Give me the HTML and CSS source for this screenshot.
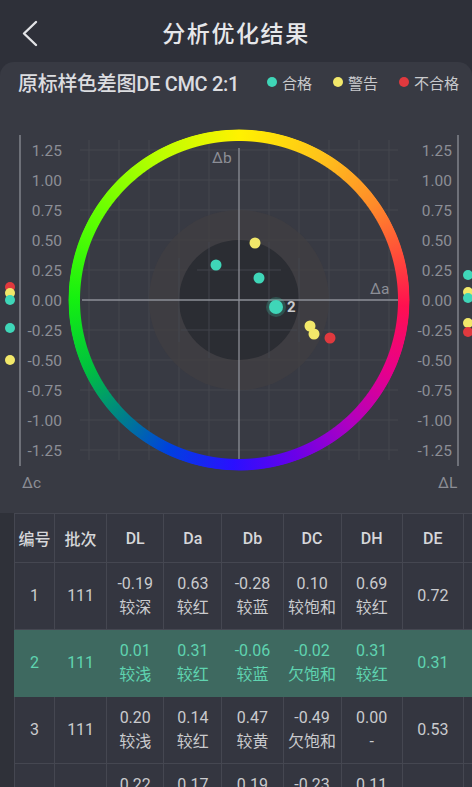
FILE: index.html
```html
<!DOCTYPE html>
<html lang="zh">
<head>
<meta charset="utf-8">
<title>分析优化结果</title>
<link rel="stylesheet" href="styles.css">
</head>
<body>
<div class="app">
  <header class="topbar">
    <svg class="back" width="20" height="28" viewBox="0 0 20 28"><polyline points="15,3 3,14.5 15,26" fill="none" stroke="#e2e3e6" stroke-width="2.4" stroke-linecap="round" stroke-linejoin="round"/></svg>
    <h1 class="title">分析优化结果</h1>
  </header>
  <section class="panel">
    <div class="legend">
      <span class="legend-title">原标样色差图DE CMC 2:1</span>
      <span class="legend-items">
        <span class="li"><i class="dot teal"></i>合格</span>
        <span class="li"><i class="dot yellow"></i>警告</span>
        <span class="li"><i class="dot red"></i>不合格</span>
      </span>
    </div>
    <div class="chart">
      <svg class="chart-svg" width="472" height="400" viewBox="0 106 472 400">
        <g stroke="#44464f" stroke-width="1">
          <line x1="89" y1="140" x2="89" y2="460"/><line x1="119" y1="140" x2="119" y2="460"/><line x1="149" y1="140" x2="149" y2="460"/><line x1="179" y1="140" x2="179" y2="460"/><line x1="209" y1="140" x2="209" y2="460"/>
          <line x1="269" y1="140" x2="269" y2="460"/><line x1="299" y1="140" x2="299" y2="460"/><line x1="329" y1="140" x2="329" y2="460"/><line x1="359" y1="140" x2="359" y2="460"/><line x1="389" y1="140" x2="389" y2="460"/>
          <line x1="80" y1="150" x2="398" y2="150"/><line x1="80" y1="180" x2="398" y2="180"/><line x1="80" y1="210" x2="398" y2="210"/><line x1="80" y1="240" x2="398" y2="240"/><line x1="80" y1="270" x2="398" y2="270"/>
          <line x1="80" y1="330" x2="398" y2="330"/><line x1="80" y1="360" x2="398" y2="360"/><line x1="80" y1="390" x2="398" y2="390"/><line x1="80" y1="420" x2="398" y2="420"/><line x1="80" y1="450" x2="398" y2="450"/>
        </g>
        <circle cx="239" cy="300" r="90" fill="#423e42" fill-opacity="0.7"/>
        <circle cx="239" cy="300" r="60" fill="#2b2d33"/>
        <g stroke="#44464e" stroke-width="1" opacity="0.9">
          <line x1="179" y1="258" x2="179" y2="342"/><line x1="209" y1="242" x2="209" y2="358"/><line x1="269" y1="242" x2="269" y2="358"/><line x1="299" y1="258" x2="299" y2="342"/>
          <line x1="197" y1="270" x2="281" y2="270"/><line x1="181" y1="330" x2="297" y2="330"/>
        </g>
        <g stroke="#8d8f97" stroke-width="1.3">
          <line x1="239" y1="148" x2="239" y2="460"/>
          <line x1="82" y1="300" x2="398" y2="300"/>
          <line x1="20" y1="135" x2="20" y2="466"/>
          <line x1="458" y1="135" x2="458" y2="466"/>
        </g>
        <g class="axis-text" text-anchor="end">
          <text x="62" y="155.5">1.25</text><text x="62" y="185.5">1.00</text><text x="62" y="215.5">0.75</text><text x="62" y="245.5">0.50</text><text x="62" y="275.5">0.25</text><text x="62" y="305.5">0.00</text>
          <text x="62" y="335.5">-0.25</text><text x="62" y="365.5">-0.50</text><text x="62" y="395.5">-0.75</text><text x="62" y="425.5">-1.00</text><text x="62" y="455.5">-1.25</text>
          <text x="452" y="155.5">1.25</text><text x="452" y="185.5">1.00</text><text x="452" y="215.5">0.75</text><text x="452" y="245.5">0.50</text><text x="452" y="275.5">0.25</text><text x="452" y="305.5">0.00</text>
          <text x="452" y="335.5">-0.25</text><text x="452" y="365.5">-0.50</text><text x="452" y="395.5">-0.75</text><text x="452" y="425.5">-1.00</text><text x="452" y="455.5">-1.25</text>
        </g>
        <g class="axis-text">
          <text x="212" y="163">Δb</text>
          <text x="370" y="294">Δa</text>
          <text x="22" y="488">Δc</text>
          <text x="438" y="488">ΔL</text>
        </g>
        <g>
          <circle cx="10" cy="287" r="5" fill="#e0393e"/>
          <circle cx="10" cy="293" r="5" fill="#f2e86a"/>
          <circle cx="10" cy="300" r="5" fill="#3fd6b8"/>
          <circle cx="10" cy="328" r="5" fill="#3fd6b8"/>
          <circle cx="10" cy="360" r="5" fill="#f2e86a"/>
          <circle cx="468" cy="275" r="5" fill="#3fd6b8"/>
          <circle cx="468" cy="292" r="5" fill="#f2e86a"/>
          <circle cx="468" cy="298" r="5" fill="#3fd6b8"/>
          <circle cx="468" cy="323" r="5" fill="#f2e86a"/>
          <circle cx="468" cy="332" r="5" fill="#e0393e"/>
        </g>
        <g>
          <circle cx="255" cy="243" r="5.5" fill="#f2e86a"/>
          <circle cx="216" cy="265" r="5.5" fill="#3fd6b8"/>
          <circle cx="259" cy="278" r="5.5" fill="#3fd6b8"/>
          <circle cx="276" cy="307" r="10" fill="#3fd6b8" fill-opacity="0.22"/>
          <circle cx="276" cy="307" r="7" fill="#3fd6b8"/>
          <circle cx="310" cy="326" r="5.5" fill="#f2e86a"/>
          <circle cx="314" cy="334" r="5.5" fill="#f2e86a"/>
          <circle cx="330" cy="338" r="5.5" fill="#e0393e"/>
          <text class="pt-label" x="287" y="312">2</text>
        </g>
      </svg>
      <div class="ring"></div>
    </div>
    <div class="table-wrap">
      <table class="data">
        <colgroup>
          <col class="c-no"><col class="c-batch"><col class="c-57"><col class="c-58"><col class="c-60"><col class="c-58"><col class="c-60"><col class="c-60"><col class="c-60">
        </colgroup>
        <thead>
          <tr><th>编号</th><th>批次</th><th>DL</th><th>Da</th><th>Db</th><th>DC</th><th>DH</th><th>DE</th><th>D</th></tr>
        </thead>
        <tbody>
          <tr>
            <td>1</td><td>111</td>
            <td><span class="v">-0.19</span><span class="v">较深</span></td>
            <td><span class="v">0.63</span><span class="v">较红</span></td>
            <td><span class="v">-0.28</span><span class="v">较蓝</span></td>
            <td><span class="v">0.10</span><span class="v">较饱和</span></td>
            <td><span class="v">0.69</span><span class="v">较红</span></td>
            <td>0.72</td><td></td>
          </tr>
          <tr class="sel">
            <td>2</td><td>111</td>
            <td><span class="v">0.01</span><span class="v">较浅</span></td>
            <td><span class="v">0.31</span><span class="v">较红</span></td>
            <td><span class="v">-0.06</span><span class="v">较蓝</span></td>
            <td><span class="v">-0.02</span><span class="v">欠饱和</span></td>
            <td><span class="v">0.31</span><span class="v">较红</span></td>
            <td>0.31</td><td></td>
          </tr>
          <tr>
            <td>3</td><td>111</td>
            <td><span class="v">0.20</span><span class="v">较浅</span></td>
            <td><span class="v">0.14</span><span class="v">较红</span></td>
            <td><span class="v">0.47</span><span class="v">较黄</span></td>
            <td><span class="v">-0.49</span><span class="v">欠饱和</span></td>
            <td><span class="v">0.00</span><span class="v">-</span></td>
            <td>0.53</td><td></td>
          </tr>
          <tr>
            <td>4</td><td>111</td>
            <td><span class="v">0.22</span><span class="v">较浅</span></td>
            <td><span class="v">0.17</span><span class="v">较红</span></td>
            <td><span class="v">0.19</span><span class="v">较黄</span></td>
            <td><span class="v">-0.23</span><span class="v">欠饱和</span></td>
            <td><span class="v">0.11</span><span class="v">较红</span></td>
            <td>0.38</td><td></td>
          </tr>
        </tbody>
      </table>
    </div>
  </section>
</div>
</body>
</html>
```
FILE: styles.css
```css
* { box-sizing: border-box; }
html, body { margin: 0; padding: 0; }
body {
  background: #2e3039;
  font-family: Roboto, "Noto Sans CJK SC", sans-serif;
  color: #d4d5d8;
  width: 472px;
  height: 787px;
  overflow: hidden;
}
.app { width: 472px; height: 787px; overflow: hidden; }
.topbar {
  height: 62px;
  display: flex;
  align-items: center;
  justify-content: center;
  position: relative;
}
.back { position: absolute; left: 21px; top: 19px; }
.title {
  margin: 0;
  font-size: 23px;
  font-weight: 500;
  color: #e6e7ea;
  letter-spacing: 1.6px;
  padding-top: 2px;
}
.panel {
  background: #383a43;
  border-radius: 14px 14px 0 0;
  height: 725px;
  overflow: hidden;
}
.legend {
  height: 44px;
  display: flex;
  align-items: center;
  justify-content: space-between;
  padding: 0 13px 4px 18px;
}
.legend-title {
  font-size: 20px;
  font-weight: 500;
  color: #dcdde0;
  letter-spacing: -0.3px;
}
.legend-items { display: flex; gap: 21px; font-size: 15px; color: #c9cacd; }
.li { display: flex; align-items: center; gap: 5px; }
.dot { display: inline-block; width: 10px; height: 10px; border-radius: 50%; }
.dot.teal { background: #3fd6b8; }
.dot.yellow { background: #f2e86a; }
.dot.red { background: #e0393e; }
.chart { position: relative; height: 400px; }
.chart-svg { display: block; }
.axis-text { font-family: Roboto, sans-serif; font-size: 15.5px; fill: #8c8e96; }
.pt-label { font-family: Roboto, sans-serif; font-size: 15px; font-weight: 700; fill: #c8c9cc; }
.ring {
  position: absolute;
  left: 68px;
  top: 23px;
  width: 342px;
  height: 342px;
  border-radius: 50%;
  background: conic-gradient(from 0deg,
    #fff200 0deg, #ffc21a 30deg, #ff8a2a 55deg, #ff4a3a 75deg, #ff1050 92deg,
    #e8008a 115deg, #b000c0 138deg, #6a00e8 160deg, #2a10ff 182deg,
    #0040e0 205deg, #00808a 225deg, #00c040 245deg, #14f010 270deg,
    #60ff00 300deg, #b8ff00 330deg, #fff200 360deg);
  -webkit-mask: radial-gradient(circle closest-side, transparent 158.5px, #000 159.5px, #000 170px, transparent 171px);
  mask: radial-gradient(circle closest-side, transparent 158.5px, #000 159.5px, #000 170px, transparent 171px);
}
.table-wrap {
  margin-top: 7px;
  padding-left: 14px;
  background: #2f3139;
  height: 274px;
}
.data {
  border-collapse: collapse;
  table-layout: fixed;
  width: 511px;
  background: #343640;
}
.c-no { width: 40px; }
.c-batch { width: 52px; }
.c-57 { width: 57px; }
.c-58 { width: 58px; }
.c-60 { width: 61px; }
.data th, .data td {
  border: 1px solid #454751;
  text-align: center;
  padding: 0;
  font-size: 16px;
}
.data th {
  height: 49px;
  font-weight: 500;
  color: #d6d7da;
}
.data td {
  height: 67px;
  color: #cacbce;
  line-height: 24px;
}
.data td .v { display: block; }
.data tr.sel td {
  background: #3e6960;
  color: #5fd4b0;
  border-color: #3e6960;
}
```
